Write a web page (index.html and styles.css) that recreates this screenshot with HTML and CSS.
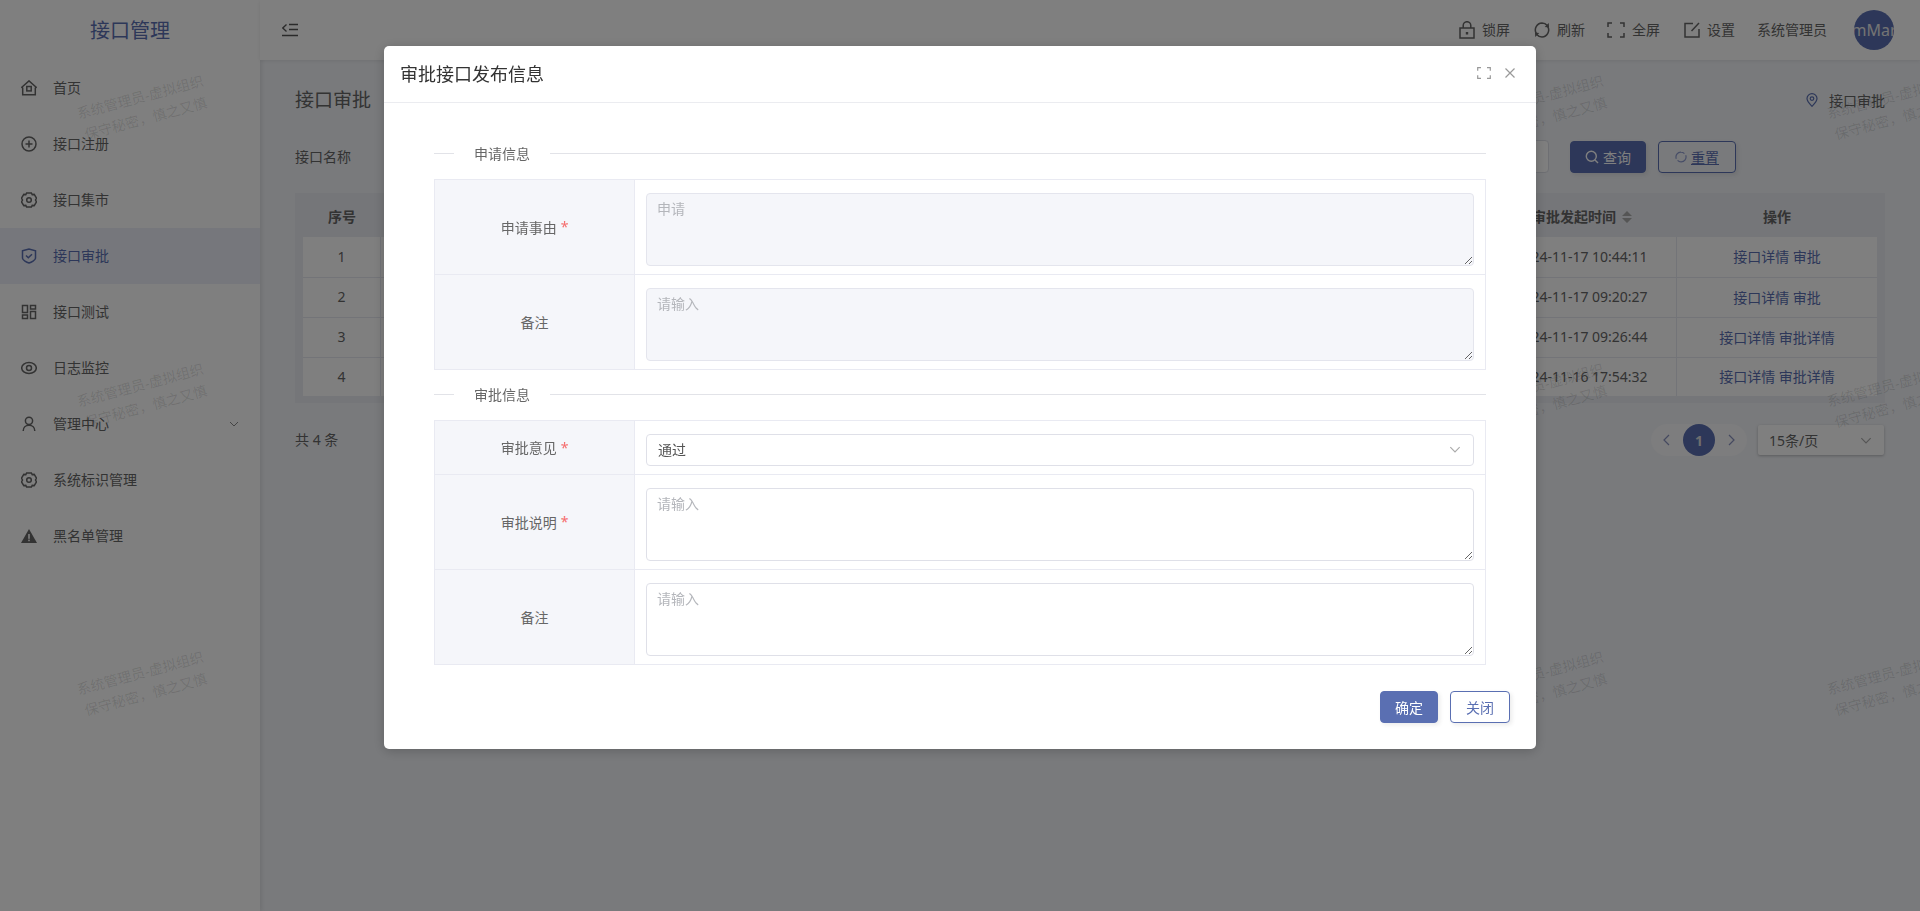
FILE: index.html
```html
<!DOCTYPE html>
<html lang="zh-CN">
<head>
<meta charset="utf-8">
<title>接口审批</title>
<link rel="stylesheet" href="styles.css">
</head>
<body>
<div class="app">
  <aside class="sidebar">
    <div class="logo">接口管理</div>
    <nav class="menu">
      <a class="menu-item"><svg class="ico" viewBox="0 0 16 16"><path d="M.8 7.200 8 .9l7.200 6.300-.9.9v6.700H1.700V8.100z"/><rect x="5.800" y="6.500" width="4.400" height="4.400"/></svg><span>首页</span></a>
      <a class="menu-item"><svg class="ico" viewBox="0 0 16 16"><circle cx="8" cy="8" r="7"/><path d="M8 4.500v7M4.500 8h7"/></svg><span>接口注册</span></a>
      <a class="menu-item"><svg class="ico" viewBox="0 0 16 16"><path d="M5.600 1h4.800l.8 1.600 2-.2 2.300 3.700-1 1.900 1 1.900-2.300 3.700-2-.2-.8 1.600H5.600l-.8-1.600-2 .2L.5 9.900l1-1.900-1-1.900 2.300-3.700 2 .2z"/><circle cx="8" cy="8" r="2.300"/></svg><span>接口集市</span></a>
      <a class="menu-item active"><svg class="ico" viewBox="0 0 16 16"><path d="M1.500 2.800 8 1l6.500 1.800v7.500c0 1.700-4.300 4-6.500 4.700-2.200-.7-6.500-3-6.500-4.700z"/><path d="m5 7.500 2.300 2.300L11 6.200"/></svg><span>接口审批</span></a>
      <a class="menu-item"><svg class="ico" viewBox="0 0 16 16"><rect x="1.500" y="1.500" width="5" height="7"/><rect x="1.500" y="11" width="5" height="3.500"/><rect x="9.500" y="1.500" width="5" height="3.500"/><rect x="9.500" y="7.500" width="5" height="7"/></svg><span>接口测试</span></a>
      <a class="menu-item"><svg class="ico" viewBox="0 0 16 16"><ellipse cx="8" cy="8" rx="7.300" ry="5.500"/><circle cx="8" cy="8" r="2.500"/></svg><span>日志监控</span></a>
      <a class="menu-item"><svg class="ico" viewBox="0 0 16 16"><circle cx="8" cy="4.800" r="3.600"/><path d="M2.200 15c0-3.500 2.500-5.800 5.800-5.800s5.800 2.300 5.800 5.800"/></svg><span>管理中心</span><svg class="chev" viewBox="0 0 10 6"><path d="m1 1 4 4 4-4"/></svg></a>
      <a class="menu-item"><svg class="ico" viewBox="0 0 16 16"><path d="M5.600 1h4.800l.8 1.600 2-.2 2.300 3.700-1 1.900 1 1.900-2.300 3.700-2-.2-.8 1.600H5.600l-.8-1.600-2 .2L.5 9.900l1-1.900-1-1.900 2.300-3.700 2 .2z"/><circle cx="8" cy="8" r="2.300"/></svg><span>系统标识管理</span></a>
      <a class="menu-item"><svg class="ico solid" viewBox="0 0 16 16"><path d="M8 1 16 15H0z"/><rect class="cut" x="7.200" y="6" width="1.600" height="4.800"/><rect class="cut" x="7.200" y="11.600" width="1.600" height="1.600"/></svg><span>黑名单管理</span></a>
    </nav>
  </aside>

  <div class="right">
    <header class="topbar">
      <svg class="toggle" viewBox="0 0 16 14"><path d="M7 1.500h9M7 6.500h9M0 12.500h16M4.500 1.500.8 5l3.700 3.500"/></svg>
      <div class="tools">
        <span class="tool"><svg class="ico" viewBox="0 0 16 18"><rect x="1" y="7" width="14" height="10"/><path d="M4.200 7V4.500a3.800 3.800 0 0 1 7.600 0V7"/><path d="M8 11v2.500" stroke-width="2.400"/></svg><span>锁屏</span></span>
        <span class="tool"><svg class="ico" viewBox="0 0 16 16"><path d="M2.300 11.500A7 7 0 0 1 8 1c2.300 0 4 1 5.200 2.500"/><path d="M13.700 4.500A7 7 0 0 1 8 15c-2.300 0-4-1-5.200-2.500"/><path class="fill" d="m14.800 1 .2 4.400-4.300-.4zM1.200 15 1 10.600l4.300.4z"/></svg><span>刷新</span></span>
        <span class="tool tight"><svg class="ico wide" viewBox="0 0 18 16"><path d="M5 1H1v4M13 1h4v4M5 15H1v-4M13 15h4v-4"/></svg><span>全屏</span></span>
        <span class="tool"><svg class="ico" viewBox="0 0 16 16"><path d="M9 1.500H1v13.500h14V7"/><path d="M15 1 7.500 9"/></svg><span>设置</span></span>
        <span class="user">系统管理员</span>
        <span class="avatar">mMar</span>
      </div>
    </header>

    <main class="content">
      <div class="title-row">
        <h1>接口审批</h1>
        <span class="crumb"><svg class="pin" viewBox="0 0 12 14"><path d="M6 13.300C3.500 10.800 1 8.500 1 5.600a5 5 0 0 1 10 0c0 2.900-2.500 5.200-5 7.700z"/><circle cx="6" cy="5.600" r="1.800"/></svg>接口审批</span>
      </div>
      <div class="search">
        <label>接口名称</label>
        <span class="search-input"></span>
        <button class="btn primary"><svg class="bi" viewBox="0 0 14 14"><circle cx="6.300" cy="6.300" r="5"/><path d="m10 10 3 3"/></svg>查询</button>
        <button class="btn ghost"><svg class="bi small" viewBox="0 0 14 14"><path d="M1.500 9A5.700 5.700 0 0 1 7 1.300c1.700 0 3 .7 4 1.800"/><path d="M12.500 5A5.700 5.700 0 0 1 7 12.700c-1.700 0-3-.7-4-1.800"/></svg><u>重置</u></button>
      </div>
      <div class="table-card">
        <table class="grid">
          <colgroup><col class="c-no"><col><col class="c-time"><col class="c-op"></colgroup>
          <thead>
            <tr><th>序号</th><th></th><th>审批发起时间<svg class="sort" viewBox="0 0 10 12"><path d="M5 0l5 5H0zM5 12 0 7h10z"/></svg></th><th>操作</th></tr>
          </thead>
          <tbody>
            <tr><td>1</td><td></td><td>2024-11-17 10:44:11</td><td><a>接口详情</a> <a>审批</a></td></tr>
            <tr><td>2</td><td></td><td>2024-11-17 09:20:27</td><td><a>接口详情</a> <a>审批</a></td></tr>
            <tr><td>3</td><td></td><td>2024-11-17 09:26:44</td><td><a>接口详情</a> <a>审批详情</a></td></tr>
            <tr><td>4</td><td></td><td>2024-11-16 17:54:32</td><td><a>接口详情</a> <a>审批详情</a></td></tr>
          </tbody>
        </table>
      </div>
      <div class="pager-row">
        <span class="total">共 4 条</span>
        <div class="pager">
          <svg class="pg" viewBox="0 0 7 12"><path d="M6 1 1 6l5 5"/></svg>
          <span class="page-num">1</span>
          <svg class="pg" viewBox="0 0 7 12"><path d="m1 1 5 5-5 5"/></svg>
        </div>
        <div class="size-select">15条/页<svg class="chev lg" viewBox="0 0 10 6"><path d="m1 1 4 4 4-4"/></svg></div>
      </div>
    </main>
  </div>

  <div class="watermarks" aria-hidden="true">
    <span>系统管理员-虚拟组织<br>保守秘密，慎之又慎</span><span>系统管理员-虚拟组织<br>保守秘密，慎之又慎</span><span>系统管理员-虚拟组织<br>保守秘密，慎之又慎</span><span>系统管理员-虚拟组织<br>保守秘密，慎之又慎</span><span>系统管理员-虚拟组织<br>保守秘密，慎之又慎</span><span>系统管理员-虚拟组织<br>保守秘密，慎之又慎</span>
    <span>系统管理员-虚拟组织<br>保守秘密，慎之又慎</span><span>系统管理员-虚拟组织<br>保守秘密，慎之又慎</span><span>系统管理员-虚拟组织<br>保守秘密，慎之又慎</span><span>系统管理员-虚拟组织<br>保守秘密，慎之又慎</span><span>系统管理员-虚拟组织<br>保守秘密，慎之又慎</span><span>系统管理员-虚拟组织<br>保守秘密，慎之又慎</span>
    <span>系统管理员-虚拟组织<br>保守秘密，慎之又慎</span><span>系统管理员-虚拟组织<br>保守秘密，慎之又慎</span><span>系统管理员-虚拟组织<br>保守秘密，慎之又慎</span><span>系统管理员-虚拟组织<br>保守秘密，慎之又慎</span><span>系统管理员-虚拟组织<br>保守秘密，慎之又慎</span><span>系统管理员-虚拟组织<br>保守秘密，慎之又慎</span>
  </div>
</div>

<div class="overlay">
  <section class="modal">
    <div class="modal-head">
      <h2>审批接口发布信息</h2>
      <div class="modal-actions">
        <svg class="mi" viewBox="0 0 14 12"><path d="M4 .7H.7v3M10 .7h3.300v3M4 11.300H.7v-3M10 11.300h3.300v-3"/></svg>
        <svg class="mi" viewBox="0 0 12 12"><path d="m1.500 1.500 9 9M10.500 1.500l-9 9"/></svg>
      </div>
    </div>
    <div class="modal-body">
      <div class="section-title"><span>申请信息</span></div>
      <div class="form-table">
        <div class="form-row">
          <div class="form-label">申请事由 <i>*</i></div>
          <div class="form-value"><textarea class="field" disabled>申请</textarea></div>
        </div>
        <div class="form-row">
          <div class="form-label">备注</div>
          <div class="form-value"><textarea class="field" disabled placeholder="请输入"></textarea></div>
        </div>
      </div>
      <div class="section-title second"><span>审批信息</span></div>
      <div class="form-table">
        <div class="form-row">
          <div class="form-label">审批意见 <i>*</i></div>
          <div class="form-value"><div class="select">通过<svg class="chev lg" viewBox="0 0 10 6"><path d="m1 1 4 4 4-4"/></svg></div></div>
        </div>
        <div class="form-row">
          <div class="form-label">审批说明 <i>*</i></div>
          <div class="form-value"><textarea class="field" placeholder="请输入"></textarea></div>
        </div>
        <div class="form-row">
          <div class="form-label">备注</div>
          <div class="form-value"><textarea class="field" placeholder="请输入"></textarea></div>
        </div>
      </div>
      <div class="modal-foot">
        <button class="mbtn ok">确定</button>
        <button class="mbtn cancel">关闭</button>
      </div>
    </div>
  </section>
</div>
</body>
</html>
```
FILE: styles.css
```css
* { box-sizing: border-box; }
html, body { margin: 0; height: 100%; overflow: hidden; }
body {
  font-family: "Noto Sans", "Noto Sans CJK SC", sans-serif;
  font-size: 14px;
  color: #666;
  background: #f2f4f8;
}
svg { display: block; flex: none; }
.app { position: relative; display: flex; height: 911px; overflow: hidden; }

/* sidebar */
.sidebar { width: 260px; flex: none; background: #fff; box-shadow: 2px 0 4px rgba(0,0,0,.08); position: relative; }
.logo { height: 60px; line-height: 62px; text-align: center; font-size: 20px; color: #5a6fb2; }
.menu-item { height: 56px; display: flex; align-items: center; padding: 0 21px; color: #666; }
.menu-item span { margin-left: 16px; padding-bottom: 2px; }
.menu-item.active { background: #eceef8; color: #5a6fb2; }
.ico { width: 16px; height: 16px; fill: none; stroke: currentColor; stroke-width: 1.500; }
.ico .fill { fill: currentColor; stroke: none; }
.ico.solid { fill: currentColor; stroke: none; }
.ico.solid .cut { fill: #fff; }
.ico.wide { width: 18px; }
.chev { width: 10px; height: 6px; fill: none; stroke: #888; stroke-width: 1; margin-left: auto; }
.chev.lg { width: 12px; height: 7px; stroke: #aaa; }

/* top bar */
.right { flex: 1; min-width: 0; display: flex; flex-direction: column; }
.topbar { height: 60px; flex: none; background: #fff; display: flex; align-items: center; padding: 0 26px 0 22px; box-shadow: 0 1px 4px rgba(0,0,0,.08); position: relative; }
.toggle { width: 16px; height: 14px; fill: none; stroke: #555; stroke-width: 1.300; }
.tools { margin-left: auto; display: flex; align-items: center; gap: 24px; }
.tool { display: flex; align-items: center; gap: 7px; color: #666; }
.tool .ico { height: 18px; }
.tool span { padding-bottom: 2px; }
.tool.tight { margin-left: -2px; }
.user { margin-left: -2px; padding-bottom: 2px; }
.avatar { width: 40px; height: 40px; border-radius: 50%; background: #5a6fb2; color: #e8e8e8; font-size: 16px; display: flex; align-items: center; justify-content: center; overflow: hidden; white-space: nowrap; margin-left: 3px; }

/* content */
.content { flex: 1; padding: 28px 35px 0; }
.title-row { display: flex; align-items: center; justify-content: space-between; height: 24px; }
h1 { margin: 0; font-size: 19px; font-weight: 400; color: #666; padding-bottom: 2px; }
.crumb { display: flex; align-items: center; gap: 11px; color: #666; }
.pin { width: 12px; height: 14px; fill: none; stroke: #5a6fb2; stroke-width: 1.200; }
.search { display: flex; align-items: center; margin-top: 28px; height: 33px; padding-right: 149px; }
.search label { color: #666; padding-bottom: 2px; }
.search-input { width: 400px; height: 33px; margin-left: auto; background: #fff; border: 1px solid #dcdfe6; border-radius: 4px; }
.btn { height: 32px; display: flex; align-items: center; justify-content: center; gap: 4px; font: inherit; border-radius: 4px; padding: 0; box-shadow: 2px 2px 4px rgba(0,0,0,.08); }
.btn.primary { width: 76px; margin-left: 21px; background: #5a6fb2; border: 1px solid #5a6fb2; color: #fff; }
.btn.ghost { width: 78px; margin-left: 12px; background: transparent; border: 1px solid #5a6fb2; color: #5a6fb2; }
.bi { width: 14px; height: 14px; fill: none; stroke: currentColor; stroke-width: 1.400; }
.bi.small { width: 12px; height: 12px; stroke: #8f9ccf; }
.table-card { margin-top: 20px; padding: 0 8px 7px; background: #ebedf2; }
.grid { width: 100%; border-collapse: separate; border-spacing: 0; table-layout: fixed; }
.c-no { width: 78px; }
.c-time { width: 190px; }
.c-op { width: 200px; }
.grid th { height: 44px; font-weight: 700; color: #666; text-align: center; white-space: nowrap; padding: 2px 0 0; }
.grid th svg { display: inline-block; width: 10px; height: 12px; fill: #aaa; margin-left: 6px; vertical-align: -1px; }
.grid td { height: 40px; text-align: center; background: #fff; color: #666; border-top: 1px solid #e6e8f0; border-right: 1px solid #e6e8f0; white-space: nowrap; padding: 0 0 2px; }
.grid td:last-child { border-right: 0; }
.grid tbody tr:first-child td { border-top: 0; }
.grid tbody tr:last-child td { height: 39px; }
.grid a { color: #5a6fb2; }
.pager-row { display: flex; align-items: center; margin-top: 21px; height: 32px; }
.total { color: #666; margin-right: auto; padding-bottom: 3px; }
.pager { width: 96px; height: 32px; background: #fafafc; border-radius: 16px; display: flex; align-items: center; justify-content: space-between; padding: 0 12px; }
.pg { width: 7px; height: 12px; fill: none; stroke: #8a93c0; stroke-width: 1.200; }
.page-num { width: 32px; height: 32px; border-radius: 50%; background: #5a6fb2; color: #ddd; font-weight: 700; display: flex; align-items: center; justify-content: center; }
.size-select { width: 126px; height: 30px; margin: 0 1px 0 11px; background: #fff; border-radius: 2px; box-shadow: 0 1px 3px rgba(0,0,0,.25); display: flex; align-items: center; justify-content: space-between; padding: 0 12px 0 11px; color: #666; }

/* watermark */
.watermarks { position: absolute; left: -32px; top: -36px; display: grid; grid-template-columns: repeat(6, 350px); grid-auto-rows: 288px; pointer-events: none; }
.watermarks span { display: flex; align-items: center; justify-content: center; text-align: center; line-height: 22px; color: rgba(0,0,0,.12); transform: rotate(-15deg); white-space: nowrap; }

/* modal */
.overlay { position: fixed; inset: 0; background: rgba(0,0,0,.5); padding: 46px 384px 0; }
.modal { background: #fff; border-radius: 5px; height: 703px; box-shadow: 0 2px 12px rgba(0,0,0,.2); }
.modal-head { height: 57px; border-bottom: 1px solid #ebecf0; display: flex; align-items: center; justify-content: space-between; padding: 0 19px 2px 16px; }
h2 { margin: 0; font-size: 18px; font-weight: 400; color: #333; }
.modal-actions { display: flex; align-items: center; gap: 12px; }
.mi { width: 14px; height: 12px; fill: none; stroke: #999; stroke-width: 1.200; }
.modal-body { padding: 40px 50px 0; }
.section-title { height: 20px; display: flex; align-items: center; margin-bottom: 16px; color: #666; }
.section-title::before { content: ""; width: 20px; height: 1px; background: #e2e3e8; }
.section-title::after { content: ""; flex: 1; height: 1px; background: #e2e3e8; }
.section-title span { padding: 0 20px; }
.section-title.second { margin-top: 14px; }
.form-table { border: 1px solid #e9eaf2; border-top: 0; }
.form-row { display: flex; border-top: 1px solid #e9eaf2; }
.form-label { width: 200px; flex: none; background: #f5f6fa; display: flex; align-items: center; justify-content: center; gap: 4px; color: #666; border-right: 1px solid #e9eaf2; padding-bottom: 1px; }
.form-label i { font-style: normal; color: #f56c6c; }
.form-value { flex: 1; padding: 13px 11px 8px 11px; }
.field { display: block; width: 100%; height: 73px; padding: 5px 10px; border: 1px solid #dfe0e8; border-radius: 4px; background: #fff; font: inherit; line-height: 20px; color: #aaa; outline: 0; resize: vertical; }
.field::placeholder { color: #b4b6bb; opacity: 1; }
.field:disabled { background: #f5f6fa; border-color: #e4e5ed; color: #b4b6bb; }
.select { height: 32px; border: 1px solid #dfe0e8; border-radius: 4px; display: flex; align-items: center; justify-content: space-between; padding: 0 12px 2px 11px; color: #555; }
.modal-foot { display: flex; justify-content: flex-end; gap: 12px; margin: 26px -24px 0 0; }
.mbtn { height: 32px; font: inherit; border-radius: 4px; padding: 0; box-shadow: 2px 2px 4px rgba(0,0,0,.08); }
.mbtn.ok { width: 58px; background: #5a6fb2; border: 1px solid #5a6fb2; color: #fff; }
.mbtn.cancel { width: 60px; background: #fff; border: 1px solid #5a6fb2; color: #5a6fb2; }
```
